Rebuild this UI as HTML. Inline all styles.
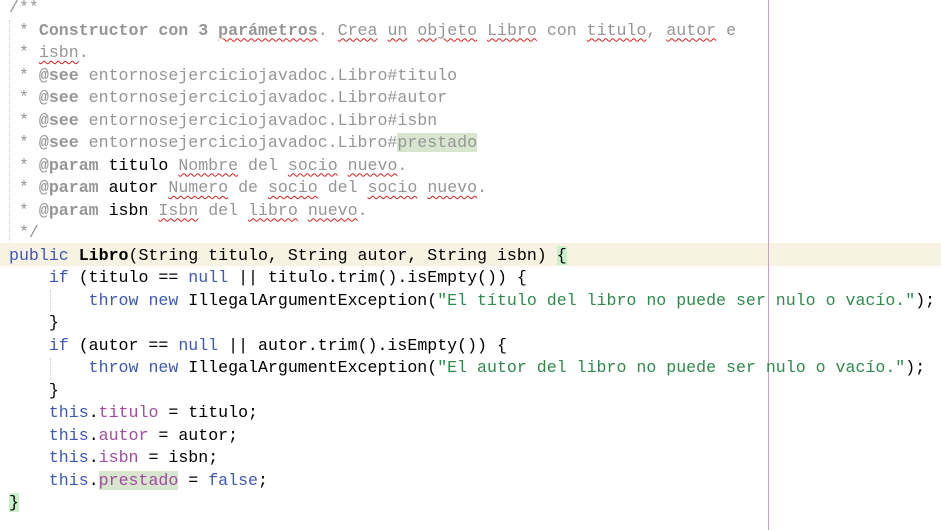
<!DOCTYPE html>
<html><head><meta charset="utf-8"><style>
html,body{margin:0;padding:0;background:#fff;width:941px;height:530px;overflow:hidden}
.ed{position:relative;width:941px;height:530px;font-family:"Liberation Mono","Courier New",monospace;font-size:16.6px;color:#000}
.l{position:absolute;left:9px;height:22.5px;line-height:22.5px;white-space:pre}
.c{color:#969696}
.b{font-weight:bold}
.k{color:#3d59b5}
.f{color:#a04da0}
.s{color:#2f8a4c}
.w{text-decoration:underline wavy #d02020;text-decoration-thickness:1px;text-underline-offset:3px}
.hl{background:#d9e6cf}
.br{background:#c9f2c9}
.cur{position:absolute;left:0;top:243px;width:941px;height:23px;background:#f8f2e2}
.vl{position:absolute;left:768px;top:0;width:1px;height:530px;background:#c8a0c8}
.g{position:absolute;width:0;border-left:1px dotted #ccc}
</style></head><body><div class="ed">
<div class="cur"></div>
<div class="vl"></div>
<div class="g" style="left:9px;top:20px;height:222px"></div>
<div class="g" style="left:50px;top:290px;height:22px"></div>
<div class="g" style="left:50px;top:358px;height:22px"></div>
<div class="l c" style="top:-3px">/**</div>
<div class="l c" style="top:19.5px"> * <span class="b">Constructor con 3 <span class="w">parámetros</span></span>. <span class="w">Crea</span> <span class="w">un</span> <span class="w">objeto</span> <span class="w">Libro</span> con <span class="w">titulo</span>, <span class="w">autor</span> e</div>
<div class="l c" style="top:42px"> * <span class="w">isbn</span>.</div>
<div class="l c" style="top:64.5px"> * <span class="b">@see</span> entornosejerciciojavadoc.Libro#titulo</div>
<div class="l c" style="top:87px"> * <span class="b">@see</span> entornosejerciciojavadoc.Libro#autor</div>
<div class="l c" style="top:109.5px"> * <span class="b">@see</span> entornosejerciciojavadoc.Libro#isbn</div>
<div class="l c" style="top:132px"> * <span class="b">@see</span> entornosejerciciojavadoc.Libro#<span class="hl">prestado</span></div>
<div class="l c" style="top:154.5px"> * <span class="b">@param</span> <span style="color:#000">titulo</span> <span class="w">Nombre</span> del <span class="w">socio</span> <span class="w">nuevo</span>.</div>
<div class="l c" style="top:177px"> * <span class="b">@param</span> <span style="color:#000">autor</span> <span class="w">Numero</span> de <span class="w">socio</span> del <span class="w">socio</span> <span class="w">nuevo</span>.</div>
<div class="l c" style="top:199.5px"> * <span class="b">@param</span> <span style="color:#000">isbn</span> <span class="w">Isbn</span> del <span class="w">libro</span> <span class="w">nuevo</span>.</div>
<div class="l c" style="top:222px"> */</div>
<div class="l" style="top:244.5px"><span class="k">public</span> <span class="b">Libro</span>(String titulo, String autor, String isbn) <span class="br">{</span></div>
<div class="l" style="top:267px">    <span class="k">if</span> (titulo == <span class="k">null</span> || titulo.trim().isEmpty()) {</div>
<div class="l" style="top:289.5px">        <span class="k">throw</span> <span class="k">new</span> IllegalArgumentException(<span class="s">"El título del libro no puede ser nulo o vacío."</span>);</div>
<div class="l" style="top:312px">    }</div>
<div class="l" style="top:334.5px">    <span class="k">if</span> (autor == <span class="k">null</span> || autor.trim().isEmpty()) {</div>
<div class="l" style="top:357px">        <span class="k">throw</span> <span class="k">new</span> IllegalArgumentException(<span class="s">"El autor del libro no puede ser nulo o vacío."</span>);</div>
<div class="l" style="top:379.5px">    }</div>
<div class="l" style="top:402px">    <span class="k">this</span>.<span class="f">titulo</span> = titulo;</div>
<div class="l" style="top:424.5px">    <span class="k">this</span>.<span class="f">autor</span> = autor;</div>
<div class="l" style="top:447px">    <span class="k">this</span>.<span class="f">isbn</span> = isbn;</div>
<div class="l" style="top:469.5px">    <span class="k">this</span>.<span class="f hl">prestado</span> = <span class="k">false</span>;</div>
<div class="l" style="top:492px"><span class="br">}</span></div>
</div></body></html>
